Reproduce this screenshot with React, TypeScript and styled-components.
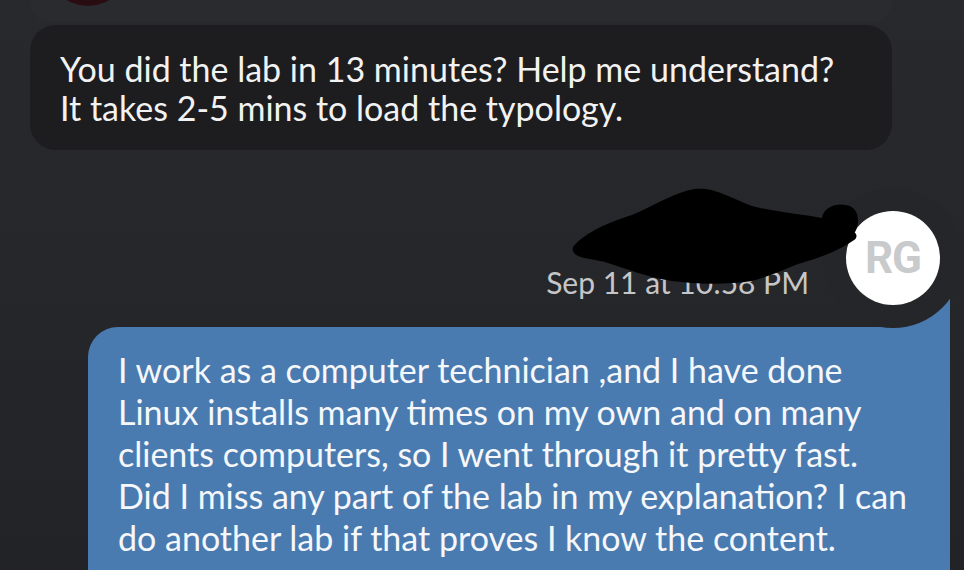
import React from 'react';
import styled, { createGlobalStyle } from 'styled-components';

const GlobalStyle = createGlobalStyle`
    html, body {
        margin: 0;
        padding: 0;
        background: #25262a;
    }
    * {
        box-sizing: border-box;
    }
`;

const Page = styled.div`
    position: relative;
    width: 964px;
    height: 570px;
    overflow: hidden;
    display: flex;
    flex-direction: column;
    background: linear-gradient(180deg, #28292c 0%, #26272a 45%, #222326 100%);
    font-family: "Lato", "Noto Sans", sans-serif;
`;

const PrevStrip = styled.div`
    margin-left: 30px;
    width: 862px;
    height: 22px;
    background: #2a2b2e;
    border-bottom-left-radius: 20px;
    border-bottom-right-radius: 20px;
    overflow: hidden;
    padding-left: 16px;
`;

const PrevAvatar = styled.div`
    width: 84px;
    height: 84px;
    margin-top: -78px;
    border-radius: 50%;
    background: radial-gradient(circle at 50% 50%, #1a0a0c 0%, #2a0d12 72%, #c2384e 86%, #8a2233 100%);
`;

const IncomingBubble = styled.div`
    margin: 3px 0 0 30px;
    width: 862px;
    padding: 24px 30px 23px;
    background: #1d1d1f;
    border-radius: 26px;
    color: #f2f2f2;
    font-size: 34px;
    line-height: 39px;
`;

const MetaRow = styled.div`
    margin-top: 61px;
    padding-right: 24px;
    display: flex;
    justify-content: flex-end;
    align-items: flex-end;
    gap: 37px;
`;

const Timestamp = styled.span`
    margin-bottom: 8px;
    font-size: 30px;
    line-height: 30px;
    color: #c6c6c8;
`;

const Avatar = styled.div`
    position: relative;
    z-index: 2;
    width: 94px;
    height: 94px;
    border-radius: 50%;
    background: #ffffff;
    box-shadow: 0 0 0 23px #252629;
    display: flex;
    align-items: center;
    justify-content: center;
    font-family: "Roboto", "Liberation Sans", sans-serif;
    font-weight: 700;
    font-size: 44px;
    letter-spacing: -1px;
    color: #c9cacc;
`;

const OutgoingBubble = styled.div`
    position: relative;
    z-index: 1;
    margin: 22px 14px 0 88px;
    flex: 1;
    padding: 22px 30px 0;
    background: #4a7bb0;
    border-radius: 30px 0 0 0;
    color: #f5f7fa;
    font-size: 34px;
    line-height: 42px;

    &::before {
        content: '';
        position: absolute;
        right: 0;
        top: -40px;
        width: 50px;
        height: 41px;
        background: #4a7bb0;
    }
`;

const Redaction = styled.svg`
    position: absolute;
    left: 560px;
    top: 180px;
    z-index: 3;
`;

const App: React.FC = () => {
    return (
        <Page>
            <GlobalStyle />
            <PrevStrip>
                <PrevAvatar />
            </PrevStrip>
            <IncomingBubble>
                You did the lab in 13 minutes? Help me understand?
                <br />
                It takes 2-5 mins to load the typology.
            </IncomingBubble>
            <MetaRow>
                <Timestamp>Sep 11 at 10:58 PM</Timestamp>
                <Avatar>RG</Avatar>
            </MetaRow>
            <OutgoingBubble>
                I work as a computer technician ,and I have done
                <br />
                Linux installs many times on my own and on many
                <br />
                clients computers, so I went through it pretty fast.
                <br />
                Did I miss any part of the lab in my explanation? I can
                <br />
                do another lab if that proves I know the content.
            </OutgoingBubble>
            <Redaction width="310" height="110" viewBox="560 180 310 110">
                <path
                    d="M 573 247 C 585 232, 610 222, 632 215 C 655 205, 675 192, 695 189 C 712 187, 725 195, 752 206 C 775 212, 800 214, 822 218 C 824 206, 838 202, 850 206 C 862 212, 860 232, 848 240 C 838 248, 822 254, 805 260 C 790 268, 770 276, 752 281 C 725 285, 695 284, 672 281 C 645 277, 625 268, 605 262 C 588 258, 570 258, 573 247 Z"
                    fill="#000"
                />
                <path
                    d="M 720 272 C 770 268, 820 258, 852 236"
                    stroke="#000"
                    strokeWidth="9"
                    fill="none"
                    strokeLinecap="round"
                />
            </Redaction>
        </Page>
    );
};

export default App;
